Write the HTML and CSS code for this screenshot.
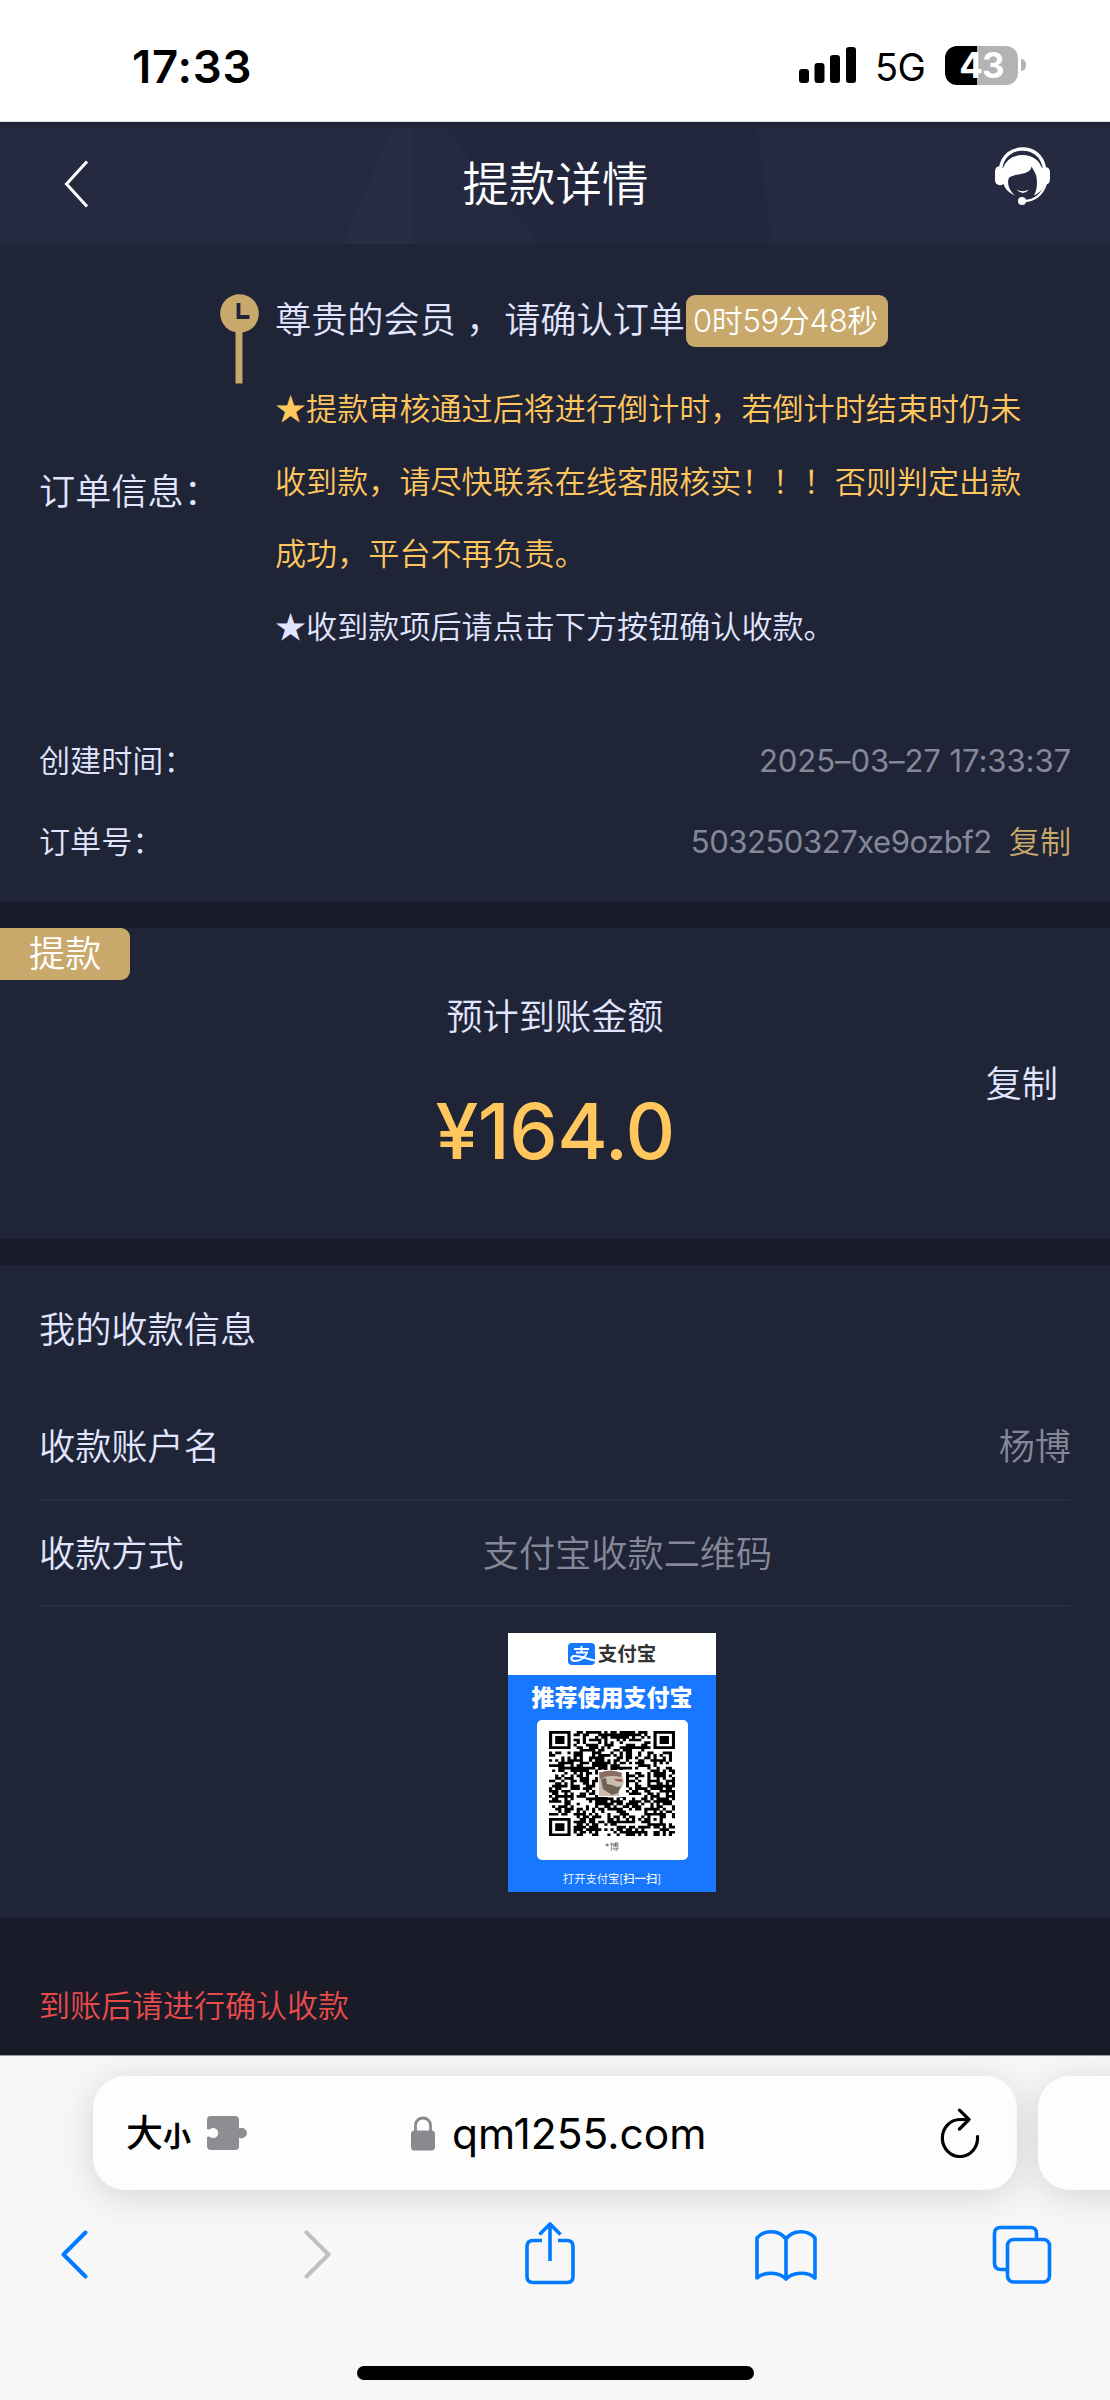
FILE: index.html
```html
<!DOCTYPE html>
<html lang="zh-CN">
<head>
<meta charset="utf-8">
<title>提款详情</title>
<link rel="stylesheet" href="styles.css">
</head>
<body>
<div class="status">
  <span class="clock">17:33</span>
  <div class="status-right">
    <svg class="signal" width="58" height="37" viewBox="0 0 58 37"><rect x="0" y="22" width="10" height="14" rx="3"/><rect x="15.500" y="16" width="10" height="20" rx="3"/><rect x="31" y="8" width="10" height="28" rx="3"/><rect x="47" y="0" width="10" height="36" rx="3"/></svg>
    <span class="net">5G</span>
    <div class="battery">43</div>
    <i class="nub"></i>
  </div>
</div>

<header class="header">
  <svg class="header-bg" width="1110" height="122" viewBox="0 0 1110 122" preserveAspectRatio="none"><path d="M392 6H412V122H343Z" fill="#2a2e45"/><path d="M445 6H757L772 122H540Z" fill="#23273d"/></svg>
  <svg class="back" width="28" height="50" viewBox="0 0 28 50"><path d="M24 3.500L3.500 26L24 48.500" fill="none" stroke="#fff" stroke-width="3"/></svg>
  <h1>提款详情</h1>
  <svg class="service" width="56" height="58" viewBox="0 0 56 58">
    <path d="M5.500 21C8 8 17 2 27.500 2S47 8 49.500 21" fill="none" stroke="#fff" stroke-width="3.400"/>
    <path d="M8 21C11 13 18 8 27.500 8S44 13 47 21C52 19 55 21 55 25V32C55 36 53 38 50 37C48 42 45 46 39 48.500C42 43 42.500 37 41.500 30C41 27 39 24 36.500 19.500C36 24 32 26 26 27C20 28 14.500 29 13.500 32C12 38 15 44 20 48.500C14 46 10 42 8.500 37C4 40 0 37 0 33V25C0 20 3 18 8 21Z" fill="#fff"/>
    <path d="M21.500 42.500Q27.500 46 34 42.500Q28 49.500 21.500 42.500Z" fill="#fff"/>
    <path d="M51 36C48 47 40 54 29 54" fill="none" stroke="#fff" stroke-width="2.400"/>
    <circle cx="27" cy="54" r="4" fill="#fff"/>
  </svg>
</header>

<section class="panel order">
  <div class="info">
    <div class="label">订单信息：</div>
    <div class="pin"><svg width="39" height="91" viewBox="0 0 39 91"><path d="M15.500 36H22.500V89.500H15.500Z" fill="#c8a96b"/><circle cx="19.500" cy="19.500" r="19.300" fill="#c8a96b"/><path d="M18.500 9V23H29.500" fill="none" stroke="#1f2436" stroke-width="3.800"/></svg></div>
    <div class="detail">
      <div class="greet">尊贵的会员 <span class="comma">，</span>请确认订单<span class="timer">0时59分48秒</span></div>
      <p class="note gold">★提款审核通过后将进行倒计时，若倒计时结束时仍未收到款，请尽快联系在线客服核实！！！否则判定出款成功，平台不再负责。</p>
      <p class="note">★收到款项后请点击下方按钮确认收款。</p>
    </div>
  </div>
  <div class="meta"><span>创建时间：</span><span class="value date">2025–03–27 17:33:37</span></div>
  <div class="meta"><span>订单号：</span><span class="value"><span class="orderno">503250327xe9ozbf2</span><a class="copy-gold">复制</a></span></div>
</section>

<section class="panel amount">
  <div class="tag">提款</div>
  <div class="amount-label">预计到账金额</div>
  <div class="copy">复制</div>
  <div class="sum">¥164.0</div>
</section>

<section class="panel payee">
  <h2>我的收款信息</h2>
  <div class="row"><span>收款账户名</span><span class="value">杨博</span></div>
  <div class="row method"><span>收款方式</span><span class="value">支付宝收款二维码</span></div>
  <div class="qr">
    <div class="qr-brand">
      <svg width="27" height="22" viewBox="0 0 27 22"><rect width="27" height="22" rx="4" fill="#1777ff"/><path d="M6 6H21M13.500 3V9.500M8 9.500H19C17.500 14 13 18 7 18C2.500 18 2 13.500 6.500 13C12 12.500 18 16 27 17.500" fill="none" stroke="#fff" stroke-width="1.900"/></svg>
      <span>支付宝</span>
    </div>
    <div class="qr-title">推荐使用支付宝</div>
    <div class="qr-card">
      <svg id="code" width="126" height="105" viewBox="0 0 41 41" preserveAspectRatio="none"></svg>
      <div class="qr-name">*博</div>
      <svg class="avatar" width="28" height="27" viewBox="0 0 28 27"><rect width="28" height="27" fill="#fff"/><path d="M1 2H23L26 11L25 15L21 21V26H1Z" fill="#cbbdad"/><path d="M1 3Q12-2 24 3L23 7Q10 4 2 9Z" fill="#8b6a62"/><path d="M3 9L8 8L9 14L14 15L19 17L23 16L20 23L14 25L5 19Z" fill="#6d6255"/><path d="M16 9H24V12L18 11Z" fill="#a35f56"/></svg>
    </div>
    <div class="qr-foot">打开支付宝[<b>扫一扫</b>]</div>
  </div>
</section>

<div class="tip">到账后请进行确认收款</div>

<footer class="browser">
  <div class="tabs">
    <div class="address">
      <span class="big">大</span><span class="small">小</span>
      <svg class="puzzle" width="41" height="34" viewBox="0 0 41 34"><path d="M4 0H28Q32 0 32 4V12.500A5.200 5.200 0 1 1 32 21.500V30Q32 34 28 34H4Q0 34 0 30V21Q2 20 4 21.500A5 5 0 1 0 4 12.500Q2 14 0 13V4Q0 0 4 0Z" fill="#8e8d92"/></svg>
      <svg class="lock" width="24" height="35" viewBox="0 0 24 35"><path d="M4.500 17V9.500C4.500-.500 19.500-.500 19.500 9.500V17" fill="none" stroke="#8a898e" stroke-width="2.800"/><rect y="14.500" width="24" height="20" rx="3.500" fill="#8a898e"/></svg>
      <span class="url">qm1255.com</span>
      <svg class="reload" width="40" height="50" viewBox="0 0 40 50"><path d="M37.500 28.500A17.600 18.500 0 1 1 20 11.500H28M19.500 2.200L29 11.500L19.500 21" fill="none" stroke="#000" stroke-width="3.200" stroke-linecap="round" stroke-linejoin="round"/></svg>
    </div>
    <div class="next-tab"></div>
  </div>
  <nav class="nav">
    <svg class="go-back" width="28" height="64" viewBox="0 0 28 64"><path d="M24.500 10.500L2.500 32.500L24.500 54.500" fill="none" stroke="#007aff" stroke-width="4" stroke-linecap="round" stroke-linejoin="round"/></svg>
    <svg class="go-forward" width="28" height="64" viewBox="0 0 28 64"><path d="M3.500 10.500L25.500 32.500L3.500 54.500" fill="none" stroke="#bfbfbf" stroke-width="4" stroke-linecap="round" stroke-linejoin="round"/></svg>
    <svg class="share" width="50" height="64" viewBox="0 0 50 64"><path d="M17 18.500H8Q2 18.500 2 24.500V54.500Q2 60.500 8 60.500H42Q48 60.500 48 54.500V24.500Q48 18.500 42 18.500H33M25 39V3M14.500 12.500L25 2L35.500 12.500" fill="none" stroke="#007aff" stroke-width="3.600" stroke-linejoin="round"/></svg>
    <svg class="book" width="62" height="64" viewBox="0 0 62 64"><path d="M31 17C24 7.500 9 7.500 2 16V56C9 49.500 24 49.500 31 57C38 49.500 53 49.500 60 56V16C53 7.500 38 7.500 31 17V57" fill="none" stroke="#007aff" stroke-width="3.600" stroke-linejoin="round"/></svg>
    <svg width="60" height="64" viewBox="0 0 60 64"><path d="M15.500 47.500H9Q2.500 47.500 2.500 41V11.500Q2.500 5.500 8.500 5.500H38.500Q44.500 5.500 44.500 11.500V17.500" fill="none" stroke="#007aff" stroke-width="3.600"/><rect x="15.500" y="17.500" width="42" height="42.500" rx="6" fill="none" stroke="#007aff" stroke-width="3.600"/></svg>
  </nav>
  <div class="home"></div>
</footer>
<script src="code.js"></script>
</body>
</html>
```
FILE: styles.css
```css
* { box-sizing: border-box; margin: 0; padding: 0; }
body {
  width: 1110px; height: 2400px; overflow: hidden;
  background: #191b29; color: #e1e5ff;
  font-family: Inter, "Noto Sans CJK SC", sans-serif;
  font-size: 36.200px; font-weight: 350; line-height: 50px;
}
svg { display: block; flex: none; }

.status { height: 122px; background: #fff; color: #000; display: flex; justify-content: space-between; padding: 0 84px 0 132px; border-bottom: 1px solid #dfe2e6; }
.clock { font-size: 45.500px; font-weight: 600; line-height: 133px; letter-spacing: .8px; }
.status-right { display: flex; align-items: flex-start; }
.signal { margin: 47px 19px 0 0; }
.net { font-size: 38px; font-weight: 400; line-height: 135px; width: 69px; letter-spacing: -.5px; margin-left: -1px; margin-right: 1px; }
.battery { width: 73px; height: 39px; margin-top: 46px; border-radius: 12px; background: linear-gradient(90deg, #000 32px, #b3b3b3 32px); color: #fff; font-size: 35px; font-weight: 700; line-height: 39px; text-align: center; letter-spacing: -1px; }
.nub { width: 5px; height: 12px; margin: 59px 0 0 3px; background: #b3b3b3; border-radius: 0 6px 6px 0; }

.header { height: 122px; position: relative; background: linear-gradient(#1b2032, #262a41 7px); display: flex; align-items: center; padding: 0 59px 0 63px; justify-content: space-between; }
.header-bg { position: absolute; left: 0; top: 0; opacity: .8; }
.back, .service, .header h1 { position: relative; }
.header h1 { font-size: 46.500px; font-weight: 350; color: #fff; margin-left: 25px; padding-top: 1px; }
.service { margin-top: -15px; }

.panel { background: #1f2436; }
.order { height: 658px; padding: 50px 39px 0; }
.info { display: flex; height: 427px; }
.label { width: 181px; padding-top: 173px; white-space: nowrap; }
.pin { width: 55px; }
.greet { height: 90px; display: flex; align-items: flex-start; white-space: pre; padding-top: 1px; }
.comma { width: 38px; }
.timer { height: 52px; margin: 0 0 0 1px; padding: 0 7px; width: 202px; border-radius: 9px; background: #c8a96b; color: #fff; font-size: 31px; line-height: 52px; letter-spacing: -.35px; }
.note { width: 756px; font: 350 31.100px/72.700px "Noto Sans CJK SC", sans-serif; position: relative; top: -13px; }
.gold { color: #ffc75e; }
.meta { display: flex; justify-content: space-between; font-size: 31.100px; height: 80.500px; line-height: 81px; }
.value { color: #858899; }
.date { font-weight: 400; letter-spacing: -.1px; }
.orderno { font-weight: 400; margin-right: 17px; letter-spacing: -.5px; }
.copy-gold { color: #c8a96b; }

.amount { margin-top: 26px; height: 311px; display: grid; grid-template-rows: 52px 74px 62px 123px; }
.tag { width: 130px; height: 52px; line-height: 53px; padding-left: 29px; color: #fff; background: #c8a96b; border-radius: 0 9px 9px 0; }
.amount-label { text-align: center; line-height: 75px; }
.copy { text-align: right; padding-right: 52px; line-height: 61px; }
.sum { text-align: center; color: #ffc75e; font-size: 77px; font-weight: 500; line-height: 80px; letter-spacing: -.500px; margin-top: -25px; }

.payee { margin-top: 26px; height: 653px; padding: 40px 39px 0; }
.payee h2 { font-size: 36.200px; font-weight: 350; line-height: 51px; margin-bottom: 37px; }
.row { display: flex; justify-content: space-between; height: 106px; line-height: 108px; border-bottom: 2px solid #282c46; }
.row:first-of-type { height: 108px; }
.method { justify-content: flex-start; line-height: 106px; }
.method .value { margin-left: 299px; }

.qr { width: 208px; height: 259px; margin: 26px 0 0 469px; background: #1777ff; color: #fff; display: flex; flex-direction: column; align-items: center; }
.qr-brand { width: 100%; height: 42px; background: #fff; color: #333; display: flex; align-items: center; justify-content: center; gap: 3px; font-size: 19.500px; font-weight: 700; line-height: 42px; }
.qr-title { font-size: 23px; font-weight: 900; line-height: 46px; height: 45px; }
.qr-card { position: relative; width: 151px; height: 140px; border-radius: 5px; background: #fff; padding-top: 10.500px; display: flex; flex-direction: column; align-items: center; }
.avatar { position: absolute; left: 61px; top: 50px; }
.qr-name { color: #555; font-size: 9.500px; line-height: 21px; }
.qr-foot { font-size: 11.300px; line-height: 39px; height: 32px; }
.qr-foot b { font-weight: 500; }

.tip { height: 137px; padding: 63px 39px 0; color: #e94b4b; font-size: 31px; background: #191b29; }

.browser { height: 345px; background: #f7f7f7; border-top: 1px solid #999; overflow: hidden; color: #000; }
.tabs { display: flex; width: 1200px; padding: 20px 0 0 93px; gap: 21px; }
.address, .next-tab { height: 114px; border-radius: 32px; background: #fdfdfd; box-shadow: 0 6px 36px rgba(0,0,0,.14); }
.address { width: 924px; display: flex; align-items: center; padding: 0 37px 0 33px; font-weight: 500; }
.big { font-size: 37px; width: 37px; padding-top: 2px; }
.small { font-size: 28px; width: 31px; padding: 8px 0 0 0; font-weight: 700; }
.puzzle { margin-left: 13px; }
.lock { margin-left: 163px; }
.url { font-size: 42.500px; font-weight: 400; margin-left: 17px; letter-spacing: 0; padding-top: 2px; }
.reload { margin-left: auto; }
.next-tab { width: 160px; }
.nav { display: flex; padding: 32px 0 0 61px; }
.go-forward { margin-left: 214px; }
.share { margin: 0 180px 0 194px; }
.book { margin-right: 175px; }
.home { width: 397px; height: 14px; border-radius: 7px; background: #000; margin: 80px 0 0 357px; }
```
FILE: code.js
```js
// Fills the 41x41 payment code: three finders, one alignment mark, and a data field.
(function () {
  var n = 41, seed = 20250327, d = '';
  function rnd() { seed = (seed * 1103515245 + 12345) % 2147483648; return seed / 2147483648; }
  function ring(x, y, cx, cy) { return Math.max(Math.abs(x - cx), Math.abs(y - cy)); }
  for (var y = 0; y < n; y++) {
    for (var x = 0; x < n; x++) {
      var on = rnd() > 0.44;
      [[3, 3], [37, 3], [3, 37]].forEach(function (c) {
        var r = ring(x, y, c[0], c[1]);
        if (r <= 4) on = r === 3 || r <= 1;
      });
      var a = ring(x, y, 34, 34);
      if (a <= 2) on = a !== 1;
      if (on) d += 'M' + x + ' ' + y + 'h1.03v1.03h-1.03z';
    }
  }
  document.getElementById('code').innerHTML = '<path d="' + d + '"/>';
})();
```
